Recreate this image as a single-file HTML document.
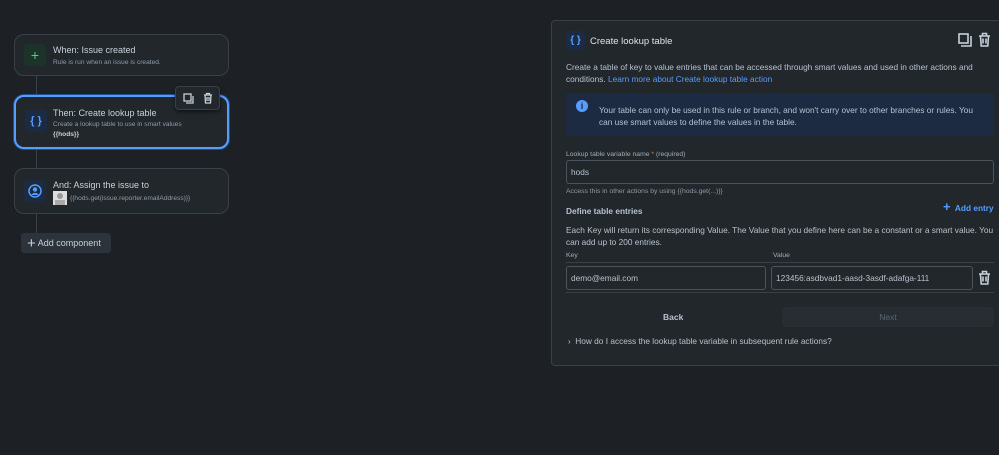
<!DOCTYPE html>
<html><head><meta charset="utf-8"><style>
*{box-sizing:border-box;margin:0;padding:0}
body{width:999px;height:455px;background:#1d2125;font-family:"Liberation Sans",sans-serif;color:#c7d1db;position:relative;overflow:hidden;font-size:9px}
.a{position:absolute;white-space:nowrap}
.card{position:absolute;left:14px;width:215px;background:#22272b;border:1px solid #38414a;border-radius:10px}
.ic{position:absolute;left:9px;width:22px;height:22px;border-radius:4px;display:flex;align-items:center;justify-content:center}
.t{position:absolute;left:38px;font-size:9px;color:#c7d1db;white-space:nowrap}
.s{position:absolute;left:38px;font-size:6.6px;color:#8c9bab;white-space:nowrap}
.line{position:absolute;left:36px;width:1px;background:#38414a}
.p{position:absolute;left:566px;font-size:8.3px;color:#b6c2cf;line-height:12px;white-space:nowrap}
.inp{position:absolute;background:#22272b;border:1px solid #4a545e;border-radius:3px;font-size:8.3px;color:#b6c2cf;padding-left:4px;display:flex;align-items:center;white-space:nowrap}
</style></head><body>
<div class="line" style="top:75px;height:22px"></div>
<div class="line" style="top:148px;height:20px"></div>
<div class="line" style="top:214px;height:20px"></div>
<div class="card" style="top:34px;height:42px">
 <div class="ic" style="top:9px;background:#1c3329;color:#4bce97;font-size:14px">+</div>
 <div class="t" style="top:10px">When: Issue created</div>
 <div class="s" style="top:24px">Rule is run when an issue is created.</div>
</div>
<div class="card" style="top:95px;height:54px;border:2px solid #579dff;box-shadow:0 0 0 1px #1d4f91">
 <div class="ic" style="top:13px;background:#1c2b41;color:#579dff;font-size:11px;font-weight:bold">{ }</div>
 <div class="t" style="top:11px;left:37px">Then: Create lookup table</div>
 <div class="s" style="top:24px;left:37px">Create a lookup table to use in smart values</div>
 <div class="s" style="top:34px;left:37px;color:#c7d1db;font-weight:bold">{{hods}}</div>
</div>
<div class="a" style="left:175px;top:86px;width:45px;height:24px;background:#22272b;border:1px solid #38414a;border-radius:4px;box-shadow:0 2px 4px #0008">
 <svg class="a" style="left:7px;top:6px" width="11" height="11" viewBox="0 0 11 11" fill="none" stroke="#c7d1db" stroke-width="1.3"><rect x="1" y="1" width="7" height="7"/><path d="M3 10h7V3"/></svg>
 <svg class="a" style="left:27px;top:5px" width="10" height="12" viewBox="0 0 10 12" fill="none" stroke="#c7d1db" stroke-width="1.3"><path d="M1 3h8M3.5 3V1.5h3V3M2 3l.5 8h5L8 3M4 5v4M6 5v4"/></svg>
</div>
<div class="card" style="top:168px;height:46px">
 <div class="ic" style="top:11px;background:#1c2b41"><svg width="14" height="14" viewBox="0 0 14 14"><circle cx="7" cy="7" r="6" fill="none" stroke="#579dff" stroke-width="1.5"/><circle cx="7" cy="5.5" r="2.2" fill="#579dff"/><path d="M3.2 11a4.5 4.5 0 0 1 7.6 0" fill="#579dff"/></svg></div>
 <div class="t" style="top:11px">And: Assign the issue to</div>
 <div class="a" style="left:38px;top:22px;width:14px;height:14px;background:#ddd"><div class="a" style="left:4px;top:2px;width:6px;height:6px;border-radius:50%;background:#999"></div><div class="a" style="left:2px;top:9px;width:10px;height:5px;background:#aaa"></div></div>
 <div class="s" style="top:26px;left:55px">{{hods.get(issue.reporter.emailAddress)}}</div>
</div>
<div class="a" style="left:21px;top:233px;width:90px;height:20px;background:#2c333a;border-radius:3px;font-size:9px;color:#c7d1db;line-height:20px;padding-left:6px"><span style="font-size:15px;vertical-align:-2px">+</span> Add component</div>

<div class="a" style="left:551px;top:20px;width:460px;height:346px;background:#22272b;border:1px solid #38414a;border-radius:4px"></div>
<div class="a" style="left:566px;top:31px;width:19px;height:19px;border-radius:4px;background:#1c2b41;color:#579dff;font-size:10px;font-weight:bold;text-align:center;line-height:19px">{ }</div>
<div class="a" style="left:590px;top:36px;font-size:9.5px;color:#dee4ea">Create lookup table</div>
<svg class="a" style="left:958px;top:33px" width="14" height="14" viewBox="0 0 14 14" fill="none" stroke="#c7d1db" stroke-width="1.6"><rect x="1" y="1" width="9" height="9"/><path d="M3 13h10V3"/></svg>
<svg class="a" style="left:978px;top:32px" width="13" height="15" viewBox="0 0 13 15" fill="none" stroke="#c7d1db" stroke-width="1.6"><path d="M1 4h11M4.5 4V1.5h4V4M2.5 4l.7 10h6.6l.7-10M5 6.5v5M8 6.5v5"/></svg>
<div class="p" style="top:61px">Create a table of key to value entries that can be accessed through smart values and used in other actions and<br>conditions. <span style="color:#579dff">Learn more about Create lookup table action</span></div>
<div class="a" style="left:566px;top:93px;width:428px;height:43px;background:#1c2b41"></div>
<div class="a" style="left:576px;top:100px;width:12px;height:12px;border-radius:50%;background:#579dff;color:#1c2b41;font-size:9px;font-weight:bold;text-align:center;line-height:12px">i</div>
<div class="p" style="left:599px;top:104px">Your table can only be used in this rule or branch, and won't carry over to other branches or rules. You<br>can use smart values to define the values in the table.</div>
<div class="p" style="top:149px;font-size:6.8px;color:#9fadbc">Lookup table variable name <span style="color:#f87168">*</span> (required)</div>
<div class="inp" style="left:566px;top:160px;width:428px;height:24px">hods</div>
<div class="p" style="top:186px;font-size:6.8px;color:#8c9bab">Access this in other actions by using {{hods.get(...)}}</div>
<div class="p" style="top:205px;font-weight:bold;color:#b6c2cf">Define table entries</div>
<div class="a" style="left:943px;top:199px;font-size:8.3px;color:#579dff;font-weight:bold"><span style="font-size:13px">+</span>&nbsp; Add entry</div>
<div class="p" style="top:224px">Each Key will return its corresponding Value. The Value that you define here can be a constant or a smart value. You<br>can add up to 200 entries.</div>
<div class="p" style="top:250px;font-size:6.8px;color:#9fadbc">Key</div>
<div class="p" style="left:773px;top:250px;font-size:6.8px;color:#9fadbc">Value</div>
<div class="a" style="left:566px;top:262px;width:428px;height:1px;background:#38414a"></div>
<div class="inp" style="left:566px;top:266px;width:200px;height:24px">demo@email.com</div>
<div class="inp" style="left:771px;top:266px;width:202px;height:24px">123456:asdbvad1-aasd-3asdf-adafga-111</div>
<svg class="a" style="left:978px;top:270px" width="13" height="15" viewBox="0 0 13 15" fill="none" stroke="#c7d1db" stroke-width="1.6"><path d="M1 4h11M4.5 4V1.5h4V4M2.5 4l.7 10h6.6l.7-10M5 6.5v5M8 6.5v5"/></svg>
<div class="a" style="left:566px;top:292px;width:428px;height:1px;background:#38414a"></div>
<div class="a" style="left:663px;top:312px;font-size:8.5px;font-weight:bold;color:#b6c2cf">Back</div>
<div class="a" style="left:782px;top:307px;width:212px;height:20px;background:#272d32;border-radius:3px;font-size:8.5px;color:#5b6670;text-align:center;line-height:20px">Next</div>
<div class="p" style="top:335px;left:568px"><span style="font-size:8px">›</span>&nbsp; How do I access the lookup table variable in subsequent rule actions?</div>
</body></html>
